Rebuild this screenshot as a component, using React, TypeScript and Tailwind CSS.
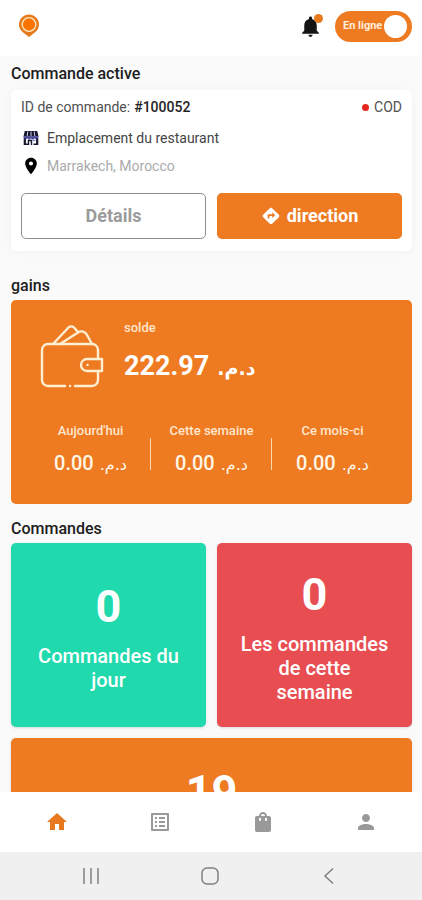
import { useState } from "react";
import type { ReactNode } from "react";
import {
  MdDirections,
  MdHome,
  MdListAlt,
  MdLocationOn,
  MdNotifications,
  MdPerson,
  MdShoppingBag,
} from "react-icons/md";

function LogoPin() {
  return (
    <svg viewBox="0 0 22 24" className="h-6 w-[22px]" aria-hidden="true">
      <path d="M11 23 6.500 19.400A10 10 0 1 1 15.500 19.400Z" fill="#e47a1c" />
      <circle cx="11" cy="10.500" r="6.800" fill="#fb7400" stroke="#ffe9c4" strokeWidth="1.300" />
    </svg>
  );
}

function StoreIcon() {
  return (
    <svg viewBox="0 0 16 16" className="h-4 w-4" aria-hidden="true">
      <path d="M1.800 1h12.400l1.300 5.500H.5Z" fill="#17172b" />
      <path d="M4.800 1.500 4.200 6M8 1.500V6M11.200 1.500l.6 4.500" stroke="#c9c9ee" strokeWidth="1" />
      <path d="M.5 6.200h15v1.300a1.900 1.900 0 0 1-3.750.4 1.900 1.900 0 0 1-3.750 0 1.900 1.900 0 0 1-3.750 0A1.900 1.900 0 0 1 .5 7.500Z" fill="#4a4a9c" />
      <path d="M1.800 8.500V15M14.200 8.500V15" stroke="#17172b" strokeWidth="2.200" />
      <path d="M2 14.300h3.500M10.500 14.300H14M5.500 15v-4.500h3V15" fill="none" stroke="#17172b" strokeWidth="1.400" />
      <path d="M9.500 10.500h3" stroke="#8d8dd0" strokeWidth="1.400" />
    </svg>
  );
}

function WalletIcon() {
  return (
    <svg
      viewBox="0 0 64 64"
      className="h-16 w-16 shrink-0"
      fill="none"
      stroke="#ffefd2"
      strokeWidth="2.400"
      strokeLinecap="round"
      strokeLinejoin="round"
      aria-hidden="true"
    >
      <path d="M58 35v-9a6 6 0 0 0-6-6H8a6 6 0 0 0-6 6v30a6 6 0 0 0 6 6h17M35 62h17a6 6 0 0 0 6-6v-9" />
      <path d="M30 62h.1" />
      <path d="M13 20 28.500 3.500a4 4 0 0 1 5.500 0l4 4.500M20 20l18-11.500a6 6 0 0 1 9 2.500l5 9" />
      <path d="M47 35h15v12H47a6 6 0 0 1 0-12Z" />
      <path d="M47.500 41h.1" />
    </svg>
  );
}

function Amount({ value, large = false }: { value: string; large?: boolean }) {
  return (
    <span
      className={
        large
          ? "flex items-baseline gap-2 text-[27px] leading-8 font-bold"
          : "flex items-baseline justify-center gap-[6px] text-xl leading-6 font-medium"
      }
    >
      {value}
      <span
        dir="rtl"
        className={
          large
            ? "font-['DejaVu_Sans',sans-serif] text-[19px] leading-8"
            : "font-['DejaVu_Sans',sans-serif] text-base leading-6 font-normal"
        }
      >
        د.م.
      </span>
    </span>
  );
}

function SectionTitle({ children }: { children: ReactNode }) {
  return <h2 className="text-base leading-5 font-medium text-[#202020]">{children}</h2>;
}

function CountCard({ count, label, color }: { count: number; label: string; color: string }) {
  return (
    <div
      className={`flex h-46 flex-col items-center justify-center gap-2 rounded-[5px] px-[22px] text-center text-white shadow-sm ${color}`}
    >
      <span className="text-[45px] leading-[58px] font-bold">{count}</span>
      <span className="text-xl leading-6 font-medium">{label}</span>
    </div>
  );
}

const periods = [
  { label: "Aujourd'hui", value: "0.00" },
  { label: "Cette semaine", value: "0.00" },
  { label: "Ce mois-ci", value: "0.00" },
];

const tabs = [
  { label: "Accueil", Icon: MdHome },
  { label: "Demandes", Icon: MdListAlt },
  { label: "Commandes", Icon: MdShoppingBag },
  { label: "Profil", Icon: MdPerson },
];

export default function App() {
  const [online, setOnline] = useState(true);
  const [tab, setTab] = useState("Accueil");

  return (
    <div className="flex h-screen flex-col overflow-hidden bg-[#fafafa] font-[Roboto,'Noto_Sans',sans-serif]">
      <header className="flex h-14 shrink-0 items-center bg-white pr-[10px] pb-1 pl-[18px]">
        <LogoPin />
        <button type="button" aria-label="Notifications" className="relative mr-3 ml-auto text-[#141414]">
          <MdNotifications size={25} />
          <span className="absolute top-0 right-0 h-[9px] w-[9px] rounded-full bg-[#e87a20]" />
        </button>
        <label className="flex h-[31px] w-[77px] cursor-pointer items-center justify-between rounded-full bg-[#ee7a22] pr-[5px] pl-2">
          <input
            type="checkbox"
            role="switch"
            className="sr-only"
            checked={online}
            onChange={(e) => setOnline(e.target.checked)}
          />
          <span className="w-10 text-[11px] leading-4 font-bold whitespace-nowrap text-[#ffeedd]">En ligne</span>
          <span className="z-10 h-[23px] w-[23px] shrink-0 rounded-full bg-white" />
        </label>
      </header>

      <main className="min-h-0 flex-1 overflow-hidden pt-2 pr-[10px] pl-[11px]">
        <SectionTitle>Commande active</SectionTitle>
        <section className="mt-[6px] rounded-[5px] bg-white px-[10px] pt-2 pb-3 shadow-[0_1px_8px_rgba(0,0,0,0.04)]">
          <div className="flex items-center text-sm leading-[18px] text-[#505050]">
            <span>ID de commande:</span>
            <span className="ml-1 font-medium text-[#222]">#100052</span>
            <span className="ml-auto h-[7px] w-[7px] rounded-full bg-[#e3271c]" />
            <span className="ml-[5px]">COD</span>
          </div>
          <div className="mt-3 flex h-5 items-center gap-[6px] text-sm text-[#444]">
            <span className="flex w-5 justify-center">
              <StoreIcon />
            </span>
            Emplacement du restaurant
          </div>
          <div className="mt-2 flex h-5 items-center gap-[6px] text-sm text-[#aaa]">
            <span className="flex w-5 justify-center text-black">
              <MdLocationOn size={20} />
            </span>
            Marrakech, Morocco
          </div>
          <div className="mt-[17px] grid grid-cols-2 gap-[11px] text-lg font-bold">
            <button type="button" className="h-[46px] rounded-[5px] border border-[#8e8e8e] text-[#9b9b9b]">
              Détails
            </button>
            <button
              type="button"
              className="flex h-[46px] items-center justify-center gap-[6px] rounded-[5px] bg-[#ee7a22] text-white"
            >
              <MdDirections size={20} />
              direction
            </button>
          </div>
        </section>

        <div className="mt-[25px]">
          <SectionTitle>gains</SectionTitle>
        </div>
        <section className="mt-1 rounded-[5px] bg-[#ee7a22] px-[19px] pt-5 pb-[27px] text-[#fff6e6]">
          <div className="flex pl-[10px]">
            <div className="mt-1">
              <WalletIcon />
            </div>
            <div className="ml-5">
              <p className="text-[13px] leading-4 font-medium text-[#ffe6cc]">solde</p>
              <div className="mt-[14px] text-white">
                <Amount value="222.97" large />
              </div>
            </div>
          </div>
          <div className="mt-[35px] grid grid-cols-3 text-center">
            {periods.map((p, i) => (
              <div key={p.label} className="flex items-center">
                <div className="flex-1">
                  <p className="text-[13px] leading-4 font-medium whitespace-nowrap text-[#ffe6cc]">{p.label}</p>
                  <div className="mt-3">
                    <Amount value={p.value} />
                  </div>
                </div>
                {i < 2 && <span className="mt-[7px] -ml-px h-8 w-px bg-[#ffd9ab]" />}
              </div>
            ))}
          </div>
        </section>

        <div className="mt-[15px]">
          <SectionTitle>Commandes</SectionTitle>
        </div>
        <div className="mt-1 grid grid-cols-2 gap-[11px]">
          <CountCard count={0} label="Commandes du jour" color="bg-[#20d9ac]" />
          <CountCard count={0} label="Les commandes de cette semaine" color="bg-[#e84e51]" />
          <div className="col-span-2 h-35 rounded-[5px] bg-[#ee7a22] pt-[25px] text-center text-[45px] leading-[58px] font-bold text-white shadow-sm">
            19
          </div>
        </div>
      </main>

      <nav className="grid h-15 shrink-0 grid-cols-4 bg-white pr-1 pl-[5px]">
        {tabs.map(({ label, Icon }) => (
          <button
            key={label}
            type="button"
            aria-label={label}
            onClick={() => setTab(label)}
            className={`flex items-center justify-center ${tab === label ? "text-[#e9791f]" : "text-[#999]"}`}
          >
            <Icon size={24} />
          </button>
        ))}
      </nav>

      <footer className="flex h-12 shrink-0 items-center justify-around bg-[#f0f0f0] pr-[34px] pl-8 text-[#808080]">
        <button type="button" aria-label="Applications récentes">
          <svg viewBox="0 0 18 18" className="h-[18px] w-[18px]" fill="none" stroke="currentColor" strokeWidth="1.500">
            <path d="M2 1v16M9 1v16M16 1v16" />
          </svg>
        </button>
        <button type="button" aria-label="Écran d'accueil">
          <svg viewBox="0 0 18 18" className="h-[18px] w-[18px]" fill="none" stroke="currentColor" strokeWidth="1.500">
            <rect x="1" y="1" width="16" height="16" rx="5" />
          </svg>
        </button>
        <button type="button" aria-label="Retour">
          <svg viewBox="0 0 18 18" className="h-[18px] w-[18px]" fill="none" stroke="currentColor" strokeWidth="1.500">
            <path d="M13 1.500 5 9l8 7.500" />
          </svg>
        </button>
      </footer>
    </div>
  );
}
